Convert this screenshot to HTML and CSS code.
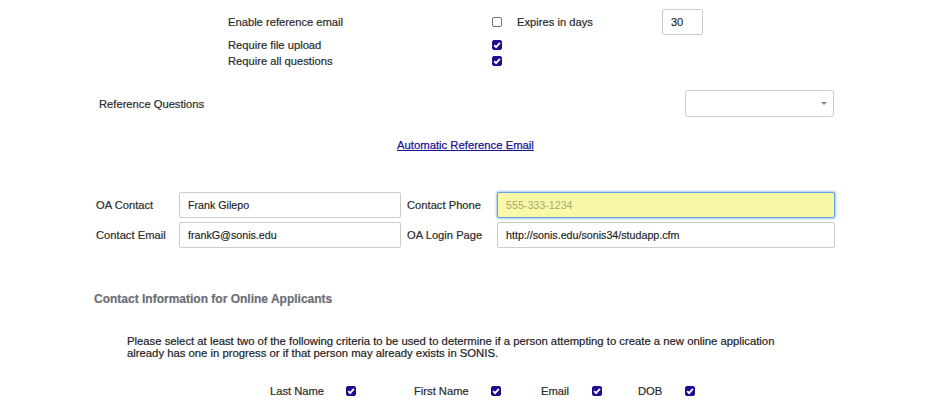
FILE: index.html
```html
<!DOCTYPE html>
<html>
<head>
<meta charset="utf-8">
<link rel="stylesheet" href="styles.css">
</head>
<body>
<div class="page">
  <div class="opts">
    <div class="opt-row first">
      <span class="lbl">Enable reference email</span>
      <span class="cb"></span>
      <span class="lbl expires">Expires in days</span>
      <span class="num">30</span>
    </div>
    <div class="opt-row">
      <span class="lbl">Require file upload</span>
      <span class="cb on"><svg viewBox="0 0 10 10"><path d="M2.2 5.2 L4.1 7.1 L7.9 2.9" /></svg></span>
    </div>
    <div class="opt-row">
      <span class="lbl">Require all questions</span>
      <span class="cb on"><svg viewBox="0 0 10 10"><path d="M2.2 5.2 L4.1 7.1 L7.9 2.9" /></svg></span>
    </div>
  </div>

  <div class="refq">
    <span class="lbl">Reference Questions</span>
    <div class="select"><span class="caret"></span></div>
  </div>

  <div class="linkrow"><a href="#">Automatic Reference Email</a></div>

  <div class="contact">
    <span class="lbl">OA Contact</span>
    <div class="inp">Frank Gilepo</div>
    <span class="lbl">Contact Phone</span>
    <div class="inp focus"><span class="ph">555-333-1234</span></div>
    <span class="lbl">Contact Email</span>
    <div class="inp">frankG@sonis.edu</div>
    <span class="lbl">OA Login Page</span>
    <div class="inp">http://sonis.edu/sonis34/studapp.cfm</div>
  </div>

  <h3 class="heading">Contact Information for Online Applicants</h3>

  <p class="note">Please select at least two of the following criteria to be used to determine if a person attempting to create a new online application<br>already has one in progress or if that person may already exists in SONIS.</p>

  <div class="criteria">
    <span class="crit"><span class="lbl c1">Last Name</span><span class="cb on"><svg viewBox="0 0 10 10"><path d="M2.2 5.2 L4.1 7.1 L7.9 2.9" /></svg></span></span>
    <span class="crit"><span class="lbl c2">First Name</span><span class="cb on"><svg viewBox="0 0 10 10"><path d="M2.2 5.2 L4.1 7.1 L7.9 2.9" /></svg></span></span>
    <span class="crit"><span class="lbl c3">Email</span><span class="cb on"><svg viewBox="0 0 10 10"><path d="M2.2 5.2 L4.1 7.1 L7.9 2.9" /></svg></span></span>
    <span class="crit"><span class="lbl c4">DOB</span><span class="cb on"><svg viewBox="0 0 10 10"><path d="M2.2 5.2 L4.1 7.1 L7.9 2.9" /></svg></span></span>
  </div>
</div>
</body>
</html>
```

FILE: styles.css
```css
html, body {
  margin: 0;
  padding: 0;
  background: #fff;
}
body {
  font-family: "Liberation Sans", Arial, sans-serif;
  font-size: 11.2px;
  color: #2b2b2b;
  width: 936px;
  height: 410px;
  overflow: hidden;
}
.page {
  padding-top: 9px;
}
.lbl {
  line-height: 16px;
  white-space: nowrap;
  font-size: 11.2px;
  -webkit-text-stroke: 0.2px #2b2b2b;
}

/* checkboxes */
.cb {
  display: inline-block;
  box-sizing: border-box;
  width: 10px;
  height: 10px;
  border: 1px solid #767676;
  border-radius: 2px;
  background: #fff;
  flex: none;
}
.cb.on {
  background: #1c0e8e;
  border-color: #1c0e8e;
  position: relative;
}
.cb.on svg {
  position: absolute;
  left: -1px;
  top: -1px;
  width: 10px;
  height: 10px;
}
.cb.on path {
  fill: none;
  stroke: #fff;
  stroke-width: 1.8;
}

/* top options */
.opts {
  padding-left: 228px;
}
.opt-row {
  display: flex;
  align-items: center;
  height: 16px;
}
.opt-row .lbl:first-child {
  width: 264px;
}
.opt-row.first {
  height: 26px;
  margin-bottom: 2px;
}
.expires {
  margin-left: 15px;
  width: 145px;
}
.num {
  box-sizing: border-box;
  width: 41px;
  height: 26px;
  border: 1px solid #ccc;
  border-radius: 2px;
  padding-left: 8px;
  line-height: 24px;
  color: #222;
  font-size: 11px;
  -webkit-text-stroke: 0.15px #222;
}

/* reference questions */
.refq {
  display: flex;
  align-items: center;
  justify-content: space-between;
  margin-top: 21px;
  padding-left: 99px;
  width: 735px;
}
.select {
  box-sizing: border-box;
  width: 149px;
  height: 27px;
  border: 1px solid #ccc;
  border-radius: 3px;
  position: relative;
}
.caret {
  position: absolute;
  right: 6px;
  top: 11px;
  width: 0;
  height: 0;
  border-left: 3px solid transparent;
  border-right: 3px solid transparent;
  border-top: 3px solid #888;
}

/* link */
.linkrow {
  margin-top: 20px;
  padding-left: 397px;
  line-height: 16px;
}
.linkrow a {
  color: #1c1592;
  font-size: 11.3px;
  text-decoration: underline;
  -webkit-text-stroke: 0.25px #1c1592;
}

/* contact grid */
.contact {
  display: grid;
  grid-template-columns: 83px 222px 6px 90px 338px;
  grid-auto-rows: 26px;
  row-gap: 4px;
  align-items: center;
  margin-top: 39px;
  padding-left: 96px;
}
.contact .lbl:nth-child(3),
.contact .lbl:nth-child(7) {
  grid-column: 4;
}
.inp {
  box-sizing: border-box;
  height: 26px;
  border: 1px solid #ccc;
  border-radius: 2px;
  padding-left: 8px;
  line-height: 24px;
  color: #222;
  font-size: 10.7px;
  white-space: nowrap;
  -webkit-text-stroke: 0.15px #222;
}
.inp.focus {
  background: #f7f9a6;
  border-color: #66a1e0;
  box-shadow: 0 0 2px 1px rgba(102, 161, 224, 0.55);
  -webkit-text-stroke: 0;
}
.ph {
  color: #a7a779;
}

/* heading */
.heading {
  margin: 44px 0 0 94px;
  font-size: 12px;
  font-weight: bold;
  color: #6b6f77;
  line-height: 14px;
  -webkit-text-stroke: 0.2px #6b6f77;
}

.note {
  margin: 29px 0 0 127px;
  font-size: 11.3px;
  line-height: 12px;
  color: #222;
  -webkit-text-stroke: 0.2px #222;
}

.criteria {
  display: flex;
  align-items: center;
  margin-top: 24px;
  padding-left: 270px;
  height: 16px;
}
.crit {
  display: flex;
  align-items: center;
}
.c1 { width: 76px; }
.c2 { width: 77px; }
.c3 { width: 51px; }
.c4 { width: 47px; }
.crit:nth-child(1) { width: 144px; }
.crit:nth-child(2) { width: 127px; }
.crit:nth-child(3) { width: 97px; }
```
